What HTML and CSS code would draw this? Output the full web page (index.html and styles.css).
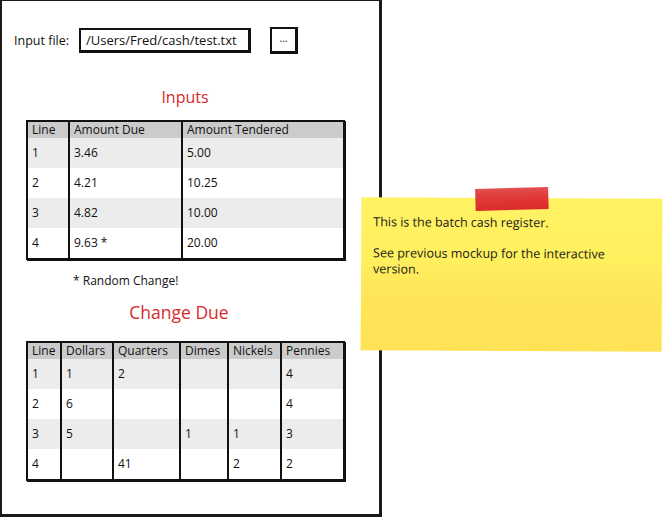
FILE: index.html
```html
<!DOCTYPE html>
<html>
<head>
<meta charset="utf-8">
<link rel="stylesheet" href="styles.css">
</head>
<body>
<div class="canvas">
  <div class="window">
    <div class="input-row">
      <span class="label">Input file:</span>
      <span class="textbox">/Users/Fred/cash/test.txt</span>
      <span class="btn">...</span>
    </div>
    <h2 class="heading inputs-h">Inputs</h2>
    <table class="grid t1">
      <colgroup><col style="width:42px"><col style="width:113px"><col style="width:162px"></colgroup>
      <thead><tr><th>Line</th><th>Amount Due</th><th>Amount Tendered</th></tr></thead>
      <tbody>
        <tr class="alt"><td>1</td><td>3.46</td><td>5.00</td></tr>
        <tr><td>2</td><td>4.21</td><td>10.25</td></tr>
        <tr class="alt"><td>3</td><td>4.82</td><td>10.00</td></tr>
        <tr><td>4</td><td>9.63 *</td><td>20.00</td></tr>
      </tbody>
    </table>
    <p class="note-text">* Random Change!</p>
    <h2 class="heading change-h">Change Due</h2>
    <table class="grid t2">
      <colgroup><col style="width:34px"><col style="width:52px"><col style="width:67px"><col style="width:48px"><col style="width:53px"><col style="width:63px"></colgroup>
      <thead><tr><th>Line</th><th>Dollars</th><th>Quarters</th><th>Dimes</th><th>Nickels</th><th>Pennies</th></tr></thead>
      <tbody>
        <tr class="alt"><td>1</td><td>1</td><td>2</td><td></td><td></td><td>4</td></tr>
        <tr><td>2</td><td>6</td><td></td><td></td><td></td><td>4</td></tr>
        <tr class="alt"><td>3</td><td>5</td><td></td><td>1</td><td>1</td><td>3</td></tr>
        <tr><td>4</td><td></td><td>41</td><td></td><td>2</td><td>2</td></tr>
      </tbody>
    </table>
  </div>
  <div class="sticky">
    <div class="tape"></div>
    <p>This is the batch cash register.<br><br>See previous mockup for the interactive version.</p>
  </div>
</div>
</body>
</html>
```
FILE: styles.css
```css
html, body {
  margin: 0;
  padding: 0;
  background: #fff;
}
body {
  font-family: "Open Sans", "DejaVu Sans", sans-serif;
  font-size: 12px;
  color: #111;
}
.canvas {
  position: relative;
  width: 664px;
  height: 518px;
}
.window {
  box-sizing: border-box;
  width: 382px;
  height: 517px;
  border: 2px solid #1a1a1a;
  border-top-width: 1px;
  border-right-width: 3px;
  border-bottom-width: 3px;
  padding: 26px 0 0 12px;
}
.input-row {
  display: flex;
  align-items: center;
  height: 26px;
}
.label {
  font-size: 12.5px;
  margin-right: 10px;
}
.textbox {
  box-sizing: border-box;
  width: 172px;
  height: 25px;
  border: 2px solid #111;
  border-right-width: 3px;
  border-bottom-width: 3px;
  font-size: 13px;
  line-height: 20px;
  padding-left: 5px;
  white-space: nowrap;
}
.btn {
  box-sizing: border-box;
  width: 28px;
  height: 27px;
  margin-left: 19px;
  border: 2px solid #111;
  border-right-width: 3px;
  border-bottom-width: 3px;
  font-size: 10px;
  text-align: center;
  line-height: 18px;
}
.heading {
  margin: 0;
  font-weight: normal;
  color: #d8282c;
  text-align: center;
}
.inputs-h {
  font-size: 16px;
  line-height: 22px;
  margin-top: 33px;
  width: 342px;
}
.change-h {
  font-size: 17.5px;
  line-height: 24px;
  margin-top: 11px;
  width: 330px;
}
.grid {
  border-collapse: collapse;
  table-layout: fixed;
  margin-left: 12px;
  border: 2px solid #111;
  box-shadow: 1px 1px 0 #111;
}
.t1 { margin-top: 12px; width: 317px; }
.t2 { margin-top: 17px; width: 317px; }
.grid th, .grid td {
  border-left: 2px solid #111;
  padding: 0 0 0 4px;
  text-align: left;
  font-weight: normal;
  font-size: 12px;
  white-space: nowrap;
  overflow: hidden;
}
.grid th:first-child, .grid td:first-child { border-left: none; }
.grid th {
  background: #cbcbcb;
  height: 16px;
  line-height: 16px;
}
.grid td {
  height: 30px;
  line-height: 16px;
}
.grid tr.alt td { background: #ececec; }
.note-text {
  margin: 13px 0 0 59px;
  font-size: 12px;
  line-height: 16px;
}
.sticky {
  position: absolute;
  left: 361px;
  top: 198px;
  width: 301px;
  height: 153px;
  background: linear-gradient(180deg, #fff263 0%, #fff05e 40%, #ffe55a 62%, #ffe255 100%);
  transform: rotate(0.3deg);
}
.sticky p {
  margin: 0;
  width: 245px;
  padding: 17px 0 0 12px;
  font-size: 12.5px;
  line-height: 15.5px;
  color: #1a1a1a;
}
.tape {
  position: absolute;
  left: 114px;
  top: -10px;
  width: 73px;
  height: 22px;
  background: linear-gradient(180deg, #e25050 0%, #e03a3a 40%, #dc2a2a 100%);
  transform: rotate(-2deg);
}
```
